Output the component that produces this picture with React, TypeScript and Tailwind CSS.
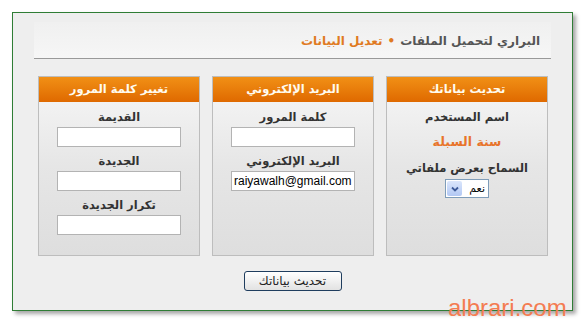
const arabic = { fontFamily: '"DejaVu Sans", "Noto Sans", sans-serif' };

const Field = ({ value }: { value?: string }) => (
  <div
    dir="ltr"
    className="mt-[2px] h-[20px] w-[124px] overflow-hidden whitespace-nowrap border border-[#b3b3b3] bg-white px-[2px] text-left text-[12px] leading-[18px] text-black"
    style={{ fontFamily: '"Liberation Sans", Arial, sans-serif' }}
  >
    {value}
  </div>
);

const Label = ({ children, orange }: { children: string; orange?: boolean }) => (
  <div
    className={`h-[16px] font-bold leading-[16px] ${
      orange ? "text-[12.5px] text-[#e8742a]" : "text-[11.5px] text-[#333333]"
    }`}
  >
    {children}
  </div>
);

const Panel = ({ title, children }: { title: string; children: React.ReactNode }) => (
  <div className="flex h-[180px] w-[162px] flex-col border border-[#bdbdbd] bg-gradient-to-b from-[#f7f7f7] via-[#e6e6e6] to-[#dedede]">
    <div className="h-[25px] bg-gradient-to-b from-[#f19015] to-[#df6900] text-center text-[11.5px] font-bold leading-[25px] text-[#fffbef]">
      {title}
    </div>
    <div className="flex flex-col items-center pt-[7px]">{children}</div>
  </div>
);

export default function App() {
  return (
    <div className="relative h-[323px] w-[585px] overflow-hidden bg-white pl-[12px] pt-[12px]" style={arabic}>
      <div dir="rtl" className="h-[299px] w-[561px] border border-[#2f7d35] bg-[#eeeeee] shadow-[3px_3px_4px_rgba(0,0,0,0.35)]">
        <div className="mx-[21px] mt-[9px] h-[37px] border-b border-[#999999] bg-gradient-to-b from-[#f0f0f0] to-[#f6f6f6] pr-[11px] text-[12px] font-bold leading-[38px]">
          <span className="text-[#555555]">البراري لتحميل الملفات</span>
          <span className="mx-[5px] text-[#e07a22]">•</span>
          <span className="text-[#e07a22]">تعديل البيانات</span>
        </div>

        <div className="mr-[24px] mt-[17px] flex gap-[12px]">
          <Panel title="تحديث بياناتك">
            <Label>اسم المستخدم</Label>
            <div className="mt-[9px]">
              <Label orange>سنة السبلة</Label>
            </div>
            <div className="mt-[10px]">
              <Label>السماح بعرض ملفاتي</Label>
            </div>
            <div className="mt-[3px] flex h-[19px] w-[44px] border border-[#7f9db9] bg-white">
              <div className="flex-1 pr-[3px] text-[11px] leading-[17px] text-black">نعم</div>
              <div className="m-[1px] flex w-[15px] items-center justify-center rounded-[2px] bg-gradient-to-b from-[#dbe6fb] to-[#b2c8f4]">
                <svg width="8" height="6" viewBox="0 0 8 6">
                  <path d="M1 1.5 L4 4.5 L7 1.5" fill="none" stroke="#3d5a99" strokeWidth="1.8" />
                </svg>
              </div>
            </div>
          </Panel>

          <Panel title="البريد الإلكتروني">
            <Label>كلمة المرور</Label>
            <Field />
            <div className="mt-[6px]">
              <Label>البريد الإلكتروني</Label>
            </div>
            <Field value="raiyawalh@gmail.com" />
          </Panel>

          <Panel title="تغيير كلمة المرور">
            <Label>القديمة</Label>
            <Field />
            <div className="mt-[6px]">
              <Label>الجديدة</Label>
            </div>
            <Field />
            <div className="mt-[6px]">
              <Label>تكرار الجديدة</Label>
            </div>
            <Field />
          </Panel>
        </div>

        <div className="mt-[15px] flex justify-center">
          <button className="h-[20px] w-[98px] rounded-[3px] border border-[#1f3d5e] bg-gradient-to-b from-white to-[#e2e2e2] text-[12px] leading-[18px] text-[#222222]">
            تحديث بياناتك
          </button>
        </div>
      </div>

      <div
        className="absolute left-[448px] top-[296px] text-[24px] leading-[24px] text-[#f47c52]"
        style={{ fontFamily: '"Liberation Sans", Arial, sans-serif' }}
      >
        albrari.com
      </div>
    </div>
  );
}
